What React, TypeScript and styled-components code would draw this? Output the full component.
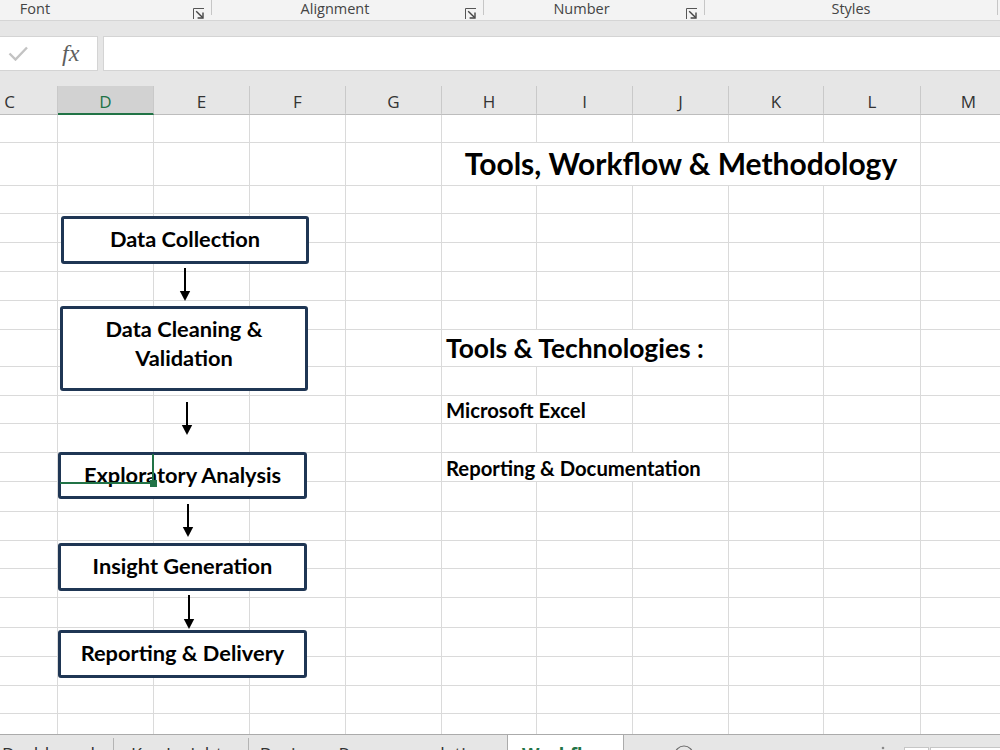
import React from 'react';
import styled, { createGlobalStyle } from 'styled-components';

const GlobalStyle = createGlobalStyle`
  html, body { margin: 0; padding: 0; background: #ffffff; }
  body { font-family: "Open Sans", "Noto Sans", sans-serif; overflow: hidden; }
  #root { width: 1000px; height: 750px; }
`;

const GREEN = '#217346';
const GRID = '#dadada';
const NAVY = '#1f3654';

const Window = styled.div`
  width: 1000px;
  height: 750px;
  overflow: hidden;
  display: flex;
  flex-direction: column;
  background: #ffffff;
`;

/* ---------- Ribbon group labels ---------- */
const Ribbon = styled.div`
  flex: none;
  height: 20px;
  display: flex;
  background: #f3f3f3;
  border-bottom: 1px solid #d5d5d5;
`;

const RibbonGroup = styled.div<{ $w: number; $offset?: number }>`
  flex: none;
  display: flex;
  width: ${(p) => p.$w}px;
  margin-left: ${(p) => p.$offset ?? 0}px;
`;

const GroupLabel = styled.div`
  flex: 1;
  text-align: center;
  font-size: 14.5px;
  line-height: 17px;
  color: #444444;
`;

const Launcher = styled.div`
  flex: none;
  width: 25px;
  padding: 3px 0 0 7px;
  box-sizing: border-box;
`;

const GroupSeparator = styled.div`
  flex: none;
  width: 1px;
  height: 15px;
  background: #c6c6c6;
`;

const LauncherIcon = () => (
  <svg width="12" height="12" viewBox="0 0 12 12">
    <path d="M0.5 11V0.5H11" fill="none" stroke="#555" strokeWidth="1" />
    <path d="M3.2 3.2L9.6 9.6" fill="none" stroke="#444" strokeWidth="1.4" />
    <path d="M10 4.6V10H4.6" fill="none" stroke="#444" strokeWidth="1.4" />
  </svg>
);

/* ---------- Formula bar ---------- */
const FormulaArea = styled.div`
  flex: none;
  height: 65px;
  box-sizing: border-box;
  padding-top: 15px;
  display: flex;
  align-items: flex-start;
  gap: 5px;
  background: #e6e6e6;
`;

const FormulaButtons = styled.div`
  flex: none;
  width: 99px;
  height: 35px;
  margin-left: -1px;
  box-sizing: border-box;
  display: flex;
  align-items: center;
  padding-left: 8px;
  background: #ffffff;
  border: 1px solid #d4d4d4;
`;

const FxLabel = styled.span`
  margin-left: 34px;
  font-family: "Liberation Serif", "DejaVu Serif", serif;
  font-style: italic;
  font-size: 24px;
  color: #5e5e5e;
  line-height: 1;
  margin-top: -2px;
`;

const FormulaInput = styled.div`
  flex: 1;
  height: 35px;
  margin-right: -2px;
  box-sizing: border-box;
  background: #ffffff;
  border: 1px solid #d4d4d4;
`;

const CheckIcon = () => (
  <svg width="20" height="15" viewBox="0 0 20 15">
    <path d="M1.5 7.5L7.5 13.5L19 1.5" fill="none" stroke="#c3c3c3" strokeWidth="2.4" />
  </svg>
);

/* ---------- Column headers & sheet ---------- */
const colWidths = [96, 96, 96, 96, 96, 95, 96, 96, 95, 97, 96];
const colLetters = ['C', 'D', 'E', 'F', 'G', 'H', 'I', 'J', 'K', 'L', 'M'];
const rowHeights = [28, 43, 28, 29, 29, 29, 29, 37, 29, 28, 29, 29, 30, 29, 28, 29, 30, 29, 29, 28, 29];
const template = colWidths.map((w) => `${w}px`).join(' ');
const totalWidth = colWidths.reduce((a, b) => a + b, 0);

const HeaderRow = styled.div`
  flex: none;
  width: ${totalWidth}px;
  margin-left: -38px;
  height: 29px;
  box-sizing: border-box;
  display: grid;
  grid-template-columns: ${template};
  background: #e6e6e6;
  border-bottom: 1px solid #bdbdbd;
`;

const HeaderCell = styled.div<{ $active?: boolean }>`
  box-sizing: border-box;
  display: flex;
  align-items: center;
  justify-content: center;
  padding-top: 3px;
  font-size: 17px;
  color: ${(p) => (p.$active ? GREEN : '#333333')};
  background: ${(p) => (p.$active ? '#d2d2d2' : 'transparent')};
  border-right: 1px solid #c9c9c9;
  border-bottom: 2px solid ${(p) => (p.$active ? GREEN : 'transparent')};
  margin-bottom: -1px;
`;

const Sheet = styled.div`
  position: relative;
  flex: none;
  width: ${totalWidth}px;
  height: 619px;
  margin-left: -38px;
  overflow: hidden;
  display: grid;
  grid-template-columns: ${template};
  grid-template-rows: ${rowHeights.map((h) => `${h}px`).join(' ')};
  background: #ffffff;
`;

type Variant = 'title' | 'heading' | 'item';

const Cell = styled.div<{ $span?: number; $variant?: Variant }>`
  grid-column: span ${(p) => p.$span ?? 1};
  box-sizing: border-box;
  border-right: 1px solid ${GRID};
  border-bottom: 1px solid ${GRID};
  display: flex;
  align-items: flex-end;
  justify-content: ${(p) => (p.$variant === 'title' ? 'center' : 'flex-start')};
  padding-left: ${(p) => (p.$variant === 'title' ? 0 : 4)}px;
  padding-bottom: ${(p) => (p.$variant === 'title' ? 7 : p.$variant === 'heading' ? 5 : 3)}px;
  font-family: Lato, "Open Sans", sans-serif;
  font-weight: 700;
  line-height: 1;
  color: #000000;
  white-space: nowrap;
  font-size: ${(p) => (p.$variant === 'title' ? 30 : p.$variant === 'heading' ? 26.4 : 20.3)}px;
`;

const cellTexts: { row: number; col: number; span: number; text: string; variant: Variant }[] = [
  { row: 1, col: 5, span: 5, text: 'Tools, Workflow & Methodology', variant: 'title' },
  { row: 7, col: 5, span: 3, text: 'Tools & Technologies :', variant: 'heading' },
  { row: 9, col: 5, span: 2, text: 'Microsoft Excel', variant: 'item' },
  { row: 11, col: 5, span: 3, text: 'Reporting & Documentation', variant: 'item' },
];

/* ---------- Flowchart drawn over the sheet ---------- */
const FlowBox = styled.div<{ $x: number; $y: number; $w: number; $h: number; $lift?: number }>`
  position: absolute;
  left: ${(p) => p.$x + 38}px;
  top: ${(p) => p.$y - 115}px;
  width: ${(p) => p.$w}px;
  height: ${(p) => p.$h}px;
  box-sizing: border-box;
  border: 3px solid ${NAVY};
  border-radius: 3px;
  background: #ffffff;
  display: flex;
  align-items: center;
  justify-content: center;
  text-align: center;
  padding-bottom: ${(p) => p.$lift ?? 3}px;
  font-family: Lato, "Open Sans", sans-serif;
  font-weight: 700;
  font-size: 21.8px;
  line-height: 29px;
  color: #000000;
  white-space: pre-line;
  z-index: 1;
`;

const ArrowWrap = styled.div<{ $x: number; $y: number; $h: number }>`
  position: absolute;
  left: ${(p) => p.$x + 38 - 6}px;
  top: ${(p) => p.$y - 115}px;
  width: 12px;
  height: ${(p) => p.$h}px;
  z-index: 1;
  display: flex;
`;

const DownArrow = ({ x, y1, y2 }: { x: number; y1: number; y2: number }) => {
  const h = y2 - y1;
  return (
    <ArrowWrap $x={x} $y={y1} $h={h}>
      <svg width="12" height={h} viewBox={`0 0 12 ${h}`}>
        <line x1="6" y1="0" x2="6" y2={h - 9} stroke="#000" strokeWidth="2" />
        <polygon points={`0.8,${h - 10} 11.2,${h - 10} 6,${h}`} fill="#000" />
      </svg>
    </ArrowWrap>
  );
};

const Selection = styled.div`
  position: absolute;
  left: 98px;
  top: 339px;
  width: 94px;
  height: 30px;
  box-sizing: border-box;
  border-right: 2px solid ${GREEN};
  border-bottom: 2px solid ${GREEN};
  z-index: 2;
`;

const FillHandle = styled.div`
  position: absolute;
  right: -5px;
  bottom: -5px;
  width: 7px;
  height: 7px;
  background: ${GREEN};
`;

const steps = [
  { label: 'Data Collection', x: 61, y: 216, w: 248, h: 48 },
  { label: 'Data Cleaning &\nValidation', x: 60, y: 306, w: 248, h: 85, lift: 11 },
  { label: 'Exploratory Analysis', x: 58, y: 452, w: 249, h: 47 },
  { label: 'Insight Generation', x: 58, y: 543, w: 249, h: 48 },
  { label: 'Reporting & Delivery', x: 58, y: 630, w: 249, h: 48 },
];

const arrows = [
  { x: 185, y1: 268, y2: 301 },
  { x: 187, y1: 402, y2: 435 },
  { x: 188, y1: 504, y2: 537 },
  { x: 189, y1: 595, y2: 629 },
];

/* ---------- Sheet tabs ---------- */
const TabBar = styled.div`
  flex: none;
  height: 16px;
  overflow: hidden;
  display: flex;
  align-items: flex-start;
  background: #e6e6e6;
  border-top: 1px solid #ababab;
`;

const Tab = styled.div<{ $w: number; $offset?: number }>`
  flex: none;
  width: ${(p) => p.$w}px;
  margin-left: ${(p) => p.$offset ?? 0}px;
  height: 30px;
  box-sizing: border-box;
  padding-top: 8px;
  display: flex;
  align-items: center;
  justify-content: center;
  font-size: 18px;
  color: #333333;
  white-space: nowrap;
`;

const ActiveTab = styled(Tab)`
  margin-top: -1px;
  height: 31px;
  padding-top: 9px;
  background: #ffffff;
  border-left: 1px solid #ababab;
  border-right: 1px solid #ababab;
  color: ${GREEN};
  font-weight: 700;
`;

const TabDivider = styled.div`
  flex: none;
  width: 1px;
  height: 30px;
  margin-top: 3px;
  background: #b4b4b4;
`;

const TabTools = styled.div`
  flex: 1;
  display: flex;
  align-items: flex-start;
`;

const AddSheet = styled.div`
  flex: none;
  margin: 10px 0 0 50px;
  display: flex;
`;

const Ellipsis = styled.div`
  flex: none;
  margin: 11px 0 0 187px;
  display: flex;
`;

const ScrollButton = styled.div`
  flex: none;
  width: 25px;
  height: 20px;
  margin: 12px 0 0 19px;
  box-sizing: border-box;
  background: #ffffff;
  border: 1px solid #c6c6c6;
  display: flex;
  justify-content: center;
  padding-top: 3px;
`;

const ScrollTrack = styled.div`
  flex: 1;
  height: 20px;
  margin: 12px -2px 0 1px;
  box-sizing: border-box;
  background: #ffffff;
  border: 1px solid #c6c6c6;
`;

const PlusCircle = () => (
  <svg width="20" height="20" viewBox="0 0 20 20">
    <circle cx="10" cy="10" r="9" fill="none" stroke="#6a6a6a" strokeWidth="1.2" />
    <path d="M10 5V15M5 10H15" stroke="#6a6a6a" strokeWidth="1.2" />
  </svg>
);

const DotsIcon = () => (
  <svg width="4" height="16" viewBox="0 0 4 16">
    <circle cx="2" cy="2" r="1.3" fill="#8a8a8a" />
    <circle cx="2" cy="8" r="1.3" fill="#8a8a8a" />
    <circle cx="2" cy="14" r="1.3" fill="#8a8a8a" />
  </svg>
);

const ScrollLeftIcon = () => (
  <svg width="6" height="10" viewBox="0 0 6 10">
    <path d="M5 0L1 5L5 10Z" fill="#555" />
  </svg>
);

function renderSheetCells() {
  const cells: React.ReactNode[] = [];
  rowHeights.forEach((_, r) => {
    let c = 0;
    while (c < colWidths.length) {
      const t = cellTexts.find((x) => x.row === r && x.col === c);
      if (t) {
        cells.push(
          <Cell key={`${r}-${c}`} $span={t.span} $variant={t.variant}>
            {t.text}
          </Cell>
        );
        c += t.span;
      } else {
        cells.push(<Cell key={`${r}-${c}`} />);
        c += 1;
      }
    }
  });
  return cells;
}

export default function App() {
  return (
    <>
      <GlobalStyle />
      <Window>
        <Ribbon>
          <RibbonGroup $w={328} $offset={-116}>
            <GroupLabel>Font</GroupLabel>
            <Launcher><LauncherIcon /></Launcher>
            <GroupSeparator />
          </RibbonGroup>
          <RibbonGroup $w={272}>
            <GroupLabel>Alignment</GroupLabel>
            <Launcher><LauncherIcon /></Launcher>
            <GroupSeparator />
          </RibbonGroup>
          <RibbonGroup $w={221}>
            <GroupLabel>Number</GroupLabel>
            <Launcher><LauncherIcon /></Launcher>
            <GroupSeparator />
          </RibbonGroup>
          <RibbonGroup $w={293}>
            <GroupLabel>Styles</GroupLabel>
            <GroupSeparator />
          </RibbonGroup>
        </Ribbon>

        <FormulaArea>
          <FormulaButtons>
            <CheckIcon />
            <FxLabel>fx</FxLabel>
          </FormulaButtons>
          <FormulaInput />
        </FormulaArea>

        <HeaderRow>
          {colLetters.map((l) => (
            <HeaderCell key={l} $active={l === 'D'}>{l}</HeaderCell>
          ))}
        </HeaderRow>

        <Sheet>
          {renderSheetCells()}
          {steps.map((s) => (
            <FlowBox key={s.label} $x={s.x} $y={s.y} $w={s.w} $h={s.h} $lift={s.lift}>
              {s.label}
            </FlowBox>
          ))}
          {arrows.map((a) => (
            <DownArrow key={a.y1} x={a.x} y1={a.y1} y2={a.y2} />
          ))}
          <Selection>
            <FillHandle />
          </Selection>
        </Sheet>

        <TabBar>
          <Tab $w={129} $offset={-16}>Dashboard</Tab>
          <TabDivider />
          <Tab $w={134}>Key Insights</Tab>
          <TabDivider />
          <Tab $w={258}>Business Recommendations</Tab>
          <ActiveTab $w={117}>Workflow</ActiveTab>
          <TabTools>
            <AddSheet><PlusCircle /></AddSheet>
            <Ellipsis><DotsIcon /></Ellipsis>
            <ScrollButton><ScrollLeftIcon /></ScrollButton>
            <ScrollTrack />
          </TabTools>
        </TabBar>
      </Window>
    </>
  );
}
